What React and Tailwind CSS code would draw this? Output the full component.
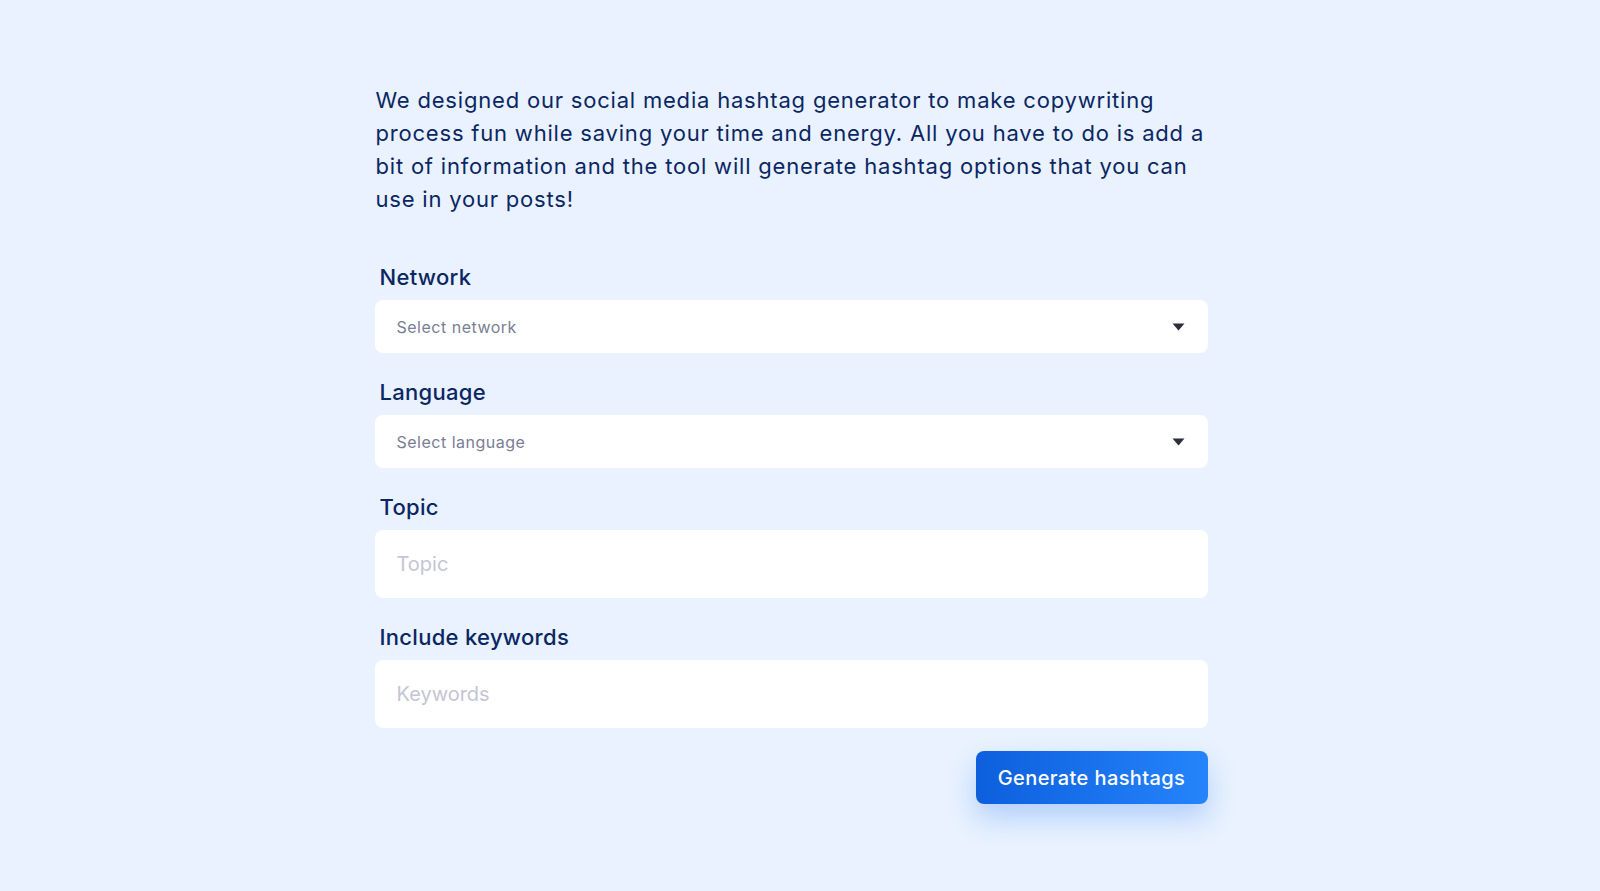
const fields = [
  { label: 'Network', type: 'select', placeholder: 'Select network' },
  { label: 'Language', type: 'select', placeholder: 'Select language' },
  { label: 'Topic', type: 'input', placeholder: 'Topic' },
  { label: 'Include keywords', type: 'input', placeholder: 'Keywords' },
];

const Caret = () => (
  <svg width="13" height="8" viewBox="0 0 13 8" className="shrink-0">
    <path d="M0.5 0.5 H12.5 L6.5 7.5 Z" fill="#2b2f3a" />
  </svg>
);

const Field = ({ field }) => (
  <div>
    <label className="block pl-[5px] mb-2 text-[22px] leading-[30px] font-medium tracking-[0.3px] text-[#0b2763]">
      {field.label}
    </label>
    {field.type === 'select' ? (
      <div className="h-[53px] bg-white rounded-lg flex items-center justify-between pl-[22px] pr-[23px]">
        <span className="text-[16px] tracking-[0.5px] text-[#7b7d95]">{field.placeholder}</span>
        <Caret />
      </div>
    ) : (
      <input
        type="text"
        placeholder={field.placeholder}
        className="w-full h-[68px] bg-white rounded-lg px-[22px] text-[20px] text-[#0b2763] placeholder:text-[#c5c5d4] outline-none"
      />
    )}
  </div>
);

export default function App() {
  return (
    <div className="min-h-screen bg-[#e9f2fe] pt-[84px] pb-16 font-['Inter',sans-serif]">
      <div className="flex justify-center pr-[18px]">
        <div className="w-[833px]">
          <p className="text-[22px] leading-[33px] tracking-[0.8px] text-[#0b2763] pl-px">
            We designed our social media hashtag generator to make copywriting process fun while saving your time and energy. All you have to do is add a bit of information and the tool will generate hashtag options that you can use in your posts!
          </p>

          <div className="mt-[46px] flex flex-col gap-6">
            {fields.map((f) => (
              <Field key={f.label} field={f} />
            ))}
          </div>

          <div className="mt-[23px] flex justify-end">
            <button className="h-[53px] w-[232px] rounded-lg bg-gradient-to-r from-[#0d5fdd] to-[#2584fb] text-white text-[20px] font-medium tracking-[0.4px] shadow-[0_14px_28px_rgba(40,120,245,0.28)]">
              Generate hashtags
            </button>
          </div>
        </div>
      </div>
    </div>
  );
}
